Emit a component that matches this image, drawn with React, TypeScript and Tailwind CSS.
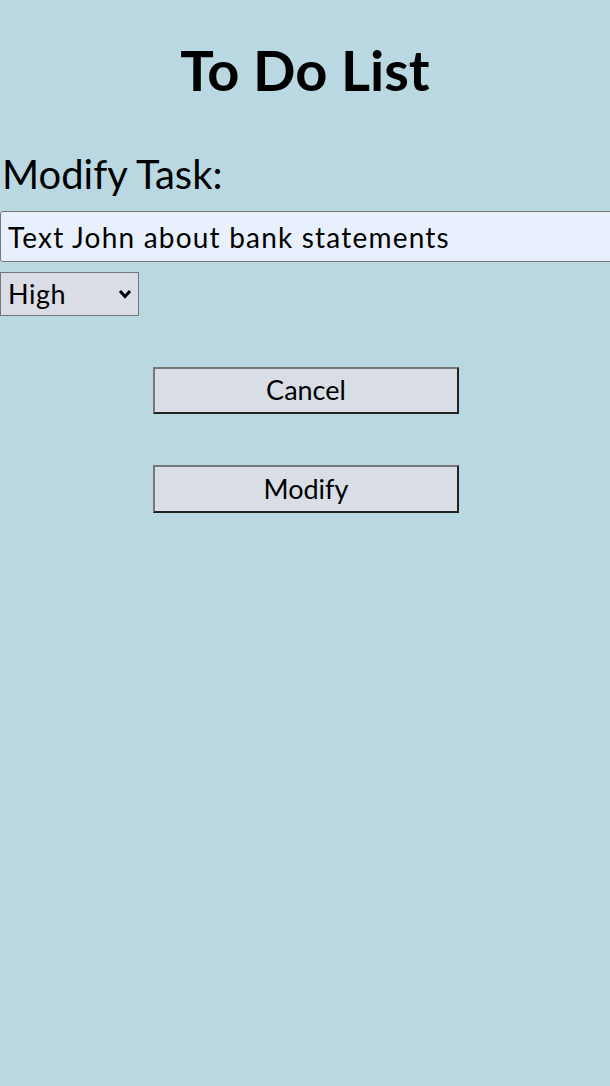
import React from "react";

export default function App() {
  return (
    <div className="min-h-[1086px] w-[610px] overflow-hidden bg-[#b9d8e1] font-['Lato','Noto_Sans',sans-serif] text-black">
      <h1 className="pt-[34px] text-center text-[56px] font-bold leading-[72px]">To Do List</h1>
      <div className="mt-[44px] pl-[2px] text-[40px] leading-[48px]">Modify Task:</div>
      <input
        className="mt-[13px] block h-[51px] w-[640px] rounded-[3px] border border-[#767676] bg-[#e8f0fe] pl-[7px] font-['Lato','Noto_Sans',sans-serif] text-[28px] tracking-[1.2px] text-black outline-none"
        defaultValue="Text John about bank statements"
      />
      <div className="relative mt-[10px] h-[44px] w-[139px]">
        <select
          className="block h-[44px] w-[139px] appearance-none border border-[#767676] bg-[#dadde6] pl-[7px] font-['Lato','Noto_Sans',sans-serif] text-[27px] tracking-[0.5px]"
          defaultValue="High"
        >
          <option>High</option>
          <option>Medium</option>
          <option>Low</option>
        </select>
        <svg
          className="pointer-events-none absolute left-[118px] top-[17px]"
          width="14"
          height="10"
          viewBox="0 0 14 10"
        >
          <path d="M2 2 L7 7.5 L12 2" fill="none" stroke="#000" strokeWidth="3" />
        </svg>
      </div>
      <div className="mt-[51px] flex flex-col items-center gap-[51px] pl-[2px]">
        <button className="h-[47px] w-[306px] border-2 border-[#767676] border-r-[#222] border-b-[#222] bg-[#d9dde6] font-['Lato','Noto_Sans',sans-serif] text-[27px]">
          Cancel
        </button>
        <button className="h-[48px] w-[306px] border-2 border-[#767676] border-r-[#222] border-b-[#222] bg-[#d9dde6] font-['Lato','Noto_Sans',sans-serif] text-[27px]">
          Modify
        </button>
      </div>
    </div>
  );
}
